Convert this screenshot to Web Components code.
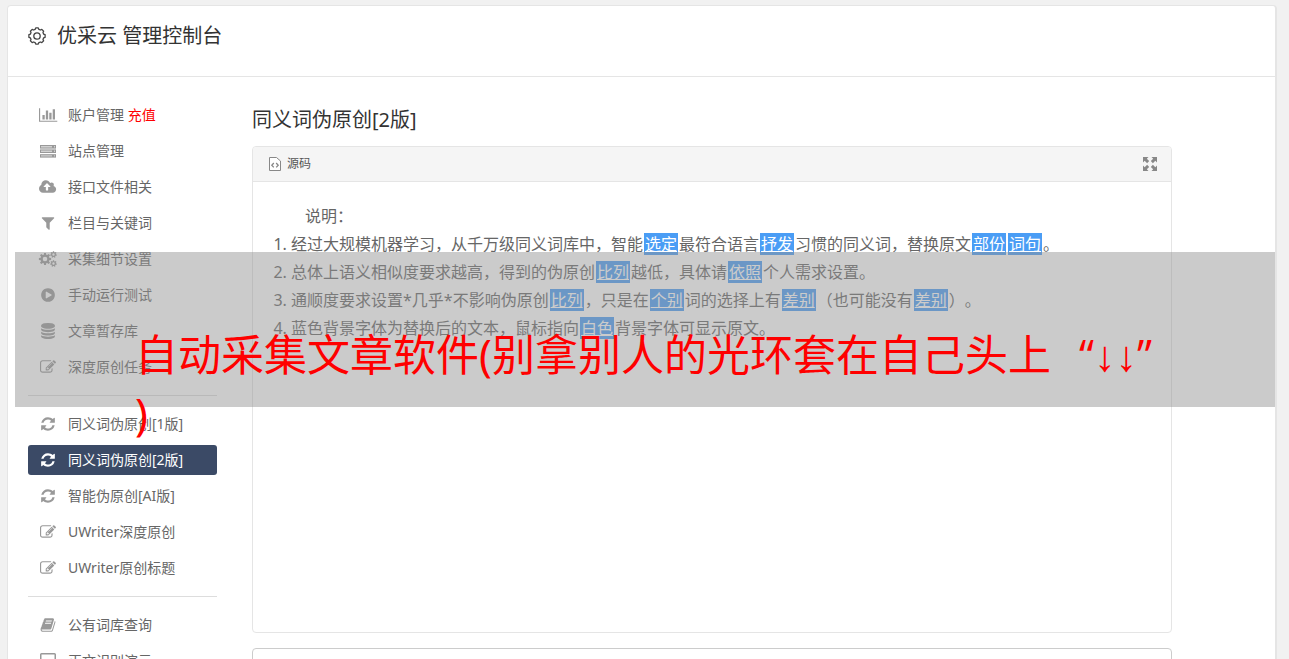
<!DOCTYPE html>
<html lang="zh-CN">
<head>
<meta charset="utf-8">
<title>优采云 管理控制台</title>
<style>
html { height: 100%; }
body { margin: 0; height: 100%; overflow: hidden; position: relative; background: #f1f1f1; color: #666; font: 14px/20px "Noto Sans", "Noto Sans CJK SC", sans-serif; text-spacing-trim: space-all; }
</style>
</head>
<body>
<console-shell>
  <console-header slot="header">优采云 管理控制台</console-header>
  <side-nav slot="nav">
    <nav-item icon="chart">账户管理 <red-note>充值</red-note></nav-item>
    <nav-item icon="server">站点管理</nav-item>
    <nav-item icon="cloud">接口文件相关</nav-item>
    <nav-item icon="filter">栏目与关键词</nav-item>
    <nav-item icon="cogs">采集细节设置</nav-item>
    <nav-item icon="play">手动运行测试</nav-item>
    <nav-item icon="database">文章暂存库</nav-item>
    <nav-item icon="edit">深度原创任务</nav-item>
    <nav-rule></nav-rule>
    <nav-item icon="refresh">同义词伪原创[1版]</nav-item>
    <nav-item icon="refresh" active>同义词伪原创[2版]</nav-item>
    <nav-item icon="refresh">智能伪原创[AI版]</nav-item>
    <nav-item icon="edit">UWriter深度原创</nav-item>
    <nav-item icon="edit">UWriter原创标题</nav-item>
    <nav-rule></nav-rule>
    <nav-item icon="book">公有词库查询</nav-item>
    <nav-item icon="laptop">正文识别演示</nav-item>
  </side-nav>
  <editor-page></editor-page>
</console-shell>
<title-banner></title-banner>

<script>
function gear(cx, cy, outer, inner, teeth) {
  const pts = [];
  for (let i = 0; i < teeth; i++) {
    [[-0.34, inner], [-0.2, outer], [0.2, outer], [0.34, inner]].forEach(([o, r]) => {
      const a = (i + o) * 2 * Math.PI / teeth - Math.PI / 2;
      pts.push((cx + r * Math.cos(a)).toFixed(2) + ' ' + (cy + r * Math.sin(a)).toFixed(2));
    });
  }
  return 'M' + pts.join('L') + 'z';
}
function hole(cx, cy, r) {
  return `M${cx - r} ${cy}a${r} ${r} 0 1 0 ${2 * r} 0a${r} ${r} 0 1 0 ${-2 * r} 0z`;
}
const fa = (w, d) => [w, 1792, `<path d="${d}"/>`];
const ICONS = {
  chart: fa(2048, 'M640 896v512h-256v-512h256zm384-512v1024h-256v-1024h256zm1024 1152v128h-2048v-1536h128v1408h1920zm-640-896v768h-256v-768h256zm384-384v1152h-256v-1152h256z'),
  server: [16, 16, '<path d="M0 2h16v3.400h-16zM0 6.600h16v3.400h-16zM0 11.200h16v3.400h-16z" opacity=".45"/><path d="M0 2h16v3.400h-16zM1 3v1.400h14v-1.400zM0 6.600h16v3.400h-16zM1 7.600v1.400h14v-1.400zM0 11.200h16v3.400h-16zM1 12.200v1.400h14v-1.400zM12 3h2v1.400h-2zM12 7.600h2v1.400h-2zM12 12.200h2v1.400h-2z"/>'],
  cloud: fa(1920, 'M1280 864q0-14-9-23l-352-352q-9-9-23-9t-23 9l-351 351q-10 12-10 24 0 14 9 23t23 9h224v352q0 13 9.500 22.500t22.500 9.500h192q13 0 22.500-9.500t9.500-22.500v-352h224q13 0 22.500-9.500t9.500-22.500zm640 288q0 159-112.500 271.500t-271.500 112.500h-1088q-185 0-316.500-131.500t-131.500-316.500q0-130 70-240t188-165q-2-30-2-43 0-212 150-362t362-150q156 0 285.500 87t188.500 231q71-62 166-62 106 0 181 75t75 181q0 76-41 138 130 31 213.500 135.500t83.500 238.500z'),
  filter: fa(1792, 'M1595 295q17 41-14 70l-493 493v742q0 42-39 59-13 5-25 5-27 0-45-19l-256-256q-19-19-19-45v-486l-493-493q-31-29-14-70 17-39 59-39h1280q42 0 59 39z'),
  cogs: [18, 16, `<path d="${gear(6, 8, 6.2, 4.5, 8)}${hole(6, 8, 2.3)}"/><path d="${gear(14.5, 3.500, 3.4, 2.4, 7)}${hole(14.5, 3.5, 1.2)}"/><path d="${gear(14.5, 12.5, 3.4, 2.4, 7)}${hole(14.5, 12.5, 1.2)}"/>`],
  play: fa(1792, 'M896 128q209 0 385.500 103t279.500 279.500 103 385.500-103 385.500-279.500 279.500-385.500 103-385.500-103-279.500-279.500-103-385.500 103-385.500 279.500-279.500 385.500-103zm384 823q32-18 32-55t-32-55l-544-320q-31-19-64-1-32 19-32 56v640q0 37 32 56 16 8 32 8 17 0 32-9z'),
  database: fa(1792, 'M896 768q237 0 443-43t325-127v170q0 69-103 128t-280 93.500-385 34.500-385-34.500-280-93.500-103-128v-170q119 84 325 127t443 43zm0 768q237 0 443-43t325-127v170q0 69-103 128t-280 93.500-385 34.500-385-34.500-280-93.500-103-128v-170q119 84 325 127t443 43zm0-384q237 0 443-43t325-127v170q0 69-103 128t-280 93.500-385 34.500-385-34.500-280-93.500-103-128v-170q119 84 325 127t443 43zm0-1152q208 0 385 34.500t280 93.500 103 128v128q0 69-103 128t-280 93.500-385 34.500-385-34.500-280-93.500-103-128v-128q0-69 103-128t280-93.500 385-34.500z'),
  edit: fa(1792, 'M888 1184l116-116-152-152-116 116v56h96v96h56zm440-720q-16-16-33 1l-350 350q-17 17-1 33t33-1l350-350q17-17 1-33zm80 594v190q0 119-84.500 203.500t-203.500 84.500h-832q-119 0-203.500-84.500t-84.500-203.500v-832q0-119 84.500-203.500t203.500-84.500h832q63 0 117 25 15 7 18 23 3 17-9 29l-49 49q-14 14-32 8-23-6-45-6h-832q-66 0-113 47t-47 113v832q0 66 47 113t113 47h832q66 0 113-47t47-113v-126q0-13 9-22l64-64q15-15 35-7t20 29zm-96-738l288 288-672 672h-288v-288zm444 132l-92 92-288-288 92-92q28-28 68-28t68 28l152 152q28 28 28 68t-28 68z'),
  refresh: fa(1792, 'M1639 1056q0 5-1 7-64 268-268 434.500t-478 166.500q-146 0-282.500-55t-243.500-157l-129 129q-19 19-45 19t-45-19-19-45v-448q0-26 19-45t45-19h448q26 0 45 19t19 45-19 45l-137 137q71 66 161 102t187 36q134 0 250-65t186-179q11-17 53-117 8-23 30-23h192q13 0 22.500 9.500t9.500 22.500zm25-800v448q0 26-19 45t-45 19h-448q-26 0-45-19t-19-45 19-45l138-138q-148-137-349-137-134 0-250 65t-186 179q-11 17-53 117-8 23-30 23h-199q-13 0-22.500-9.500t-9.500-22.500v-7q65-268 270-434.500t480-166.500q146 0 284 55.500t245 156.500l130-129q19-19 45-19t45 19 19 45z'),
  book: fa(1792, 'M1703 478q40 57 18 129l-275 906q-19 64-76.500 107.500t-122.500 43.500h-923q-77 0-148.500-53.500t-99.500-131.500q-24-67-2-127 0-4 3-27t4-37q1-8-3-21.500t-3-19.500q2-11 8-21t16.500-23.500 16.500-23.500q23-38 45-91.500t30-91.500q3-10 .5-30t-.5-28q3-11 17-28t17-23q21-36 42-92t25-90q1-9-2.500-32t.5-28q4-13 22-30.500t22-22.500q19-26 42.500-84.500t27.500-96.500q1-8-3-25.500t-2-26.500q2-8 9-18t18-23 17-21q8-12 16.500-30.500t15-35 16-36 19.500-32 26.500-23.500 36-11.500 47.500 5.500l-1 3q38-9 51-9h761q74 0 114 56t18 130l-274 906q-36 119-71.500 153.500t-128.500 34.500h-869q-27 0-38 15-11 16-1 43 24 70 144 70h923q29 0 56-15.500t35-41.500l300-987q7-22 5-57 38 15 59 43zm-1064 2q-4 13 2 22.500t20 9.500h608q13 0 25.500-9.500t16.500-22.500l21-64q4-13-2-22.500t-20-9.500h-608q-13 0-25.500 9.500t-16.500 22.500zm-83 256q-4 13 2 22.500t20 9.500h608q13 0 25.500-9.500t16.500-22.500l21-64q4-13-2-22.500t-20-9.500h-608q-13 0-25.500 9.500t-16.500 22.500z'),
  laptop: [18, 16, '<path d="M2.500 0h13q1.500 0 1.500 1.500v9q0 1.500-1.500 1.500h-13q-1.500 0-1.500-1.500v-9q0-1.500 1.500-1.500zM2.500 1.500v9h13v-9zM0 13h18v1q-1 1-2 1h-14q-1 0-2-1z"/>'],
  settings: [18, 18, `<g fill="none" stroke="currentColor" stroke-width="1.300" stroke-linejoin="round"><path d="${gear(9, 9, 8.2, 6.9, 8)}"/><circle cx="9" cy="9" r="3.200"/></g>`],
  source: [12, 14, '<g fill="none" stroke="currentColor"><path d="M.5.500h7l4 3.500v9.500h-11z" fill="#fff"/><path d="M4.800 6l-2 2.200 2 2.200M7.200 6l2 2.200-2 2.200" stroke-width="1.300"/></g>'],
  expand: [14, 14, '<path d="M0 0h5.500L3.800 1.700 6.200 4.100 4.100 6.200 1.700 3.800 0 5.500zM14 0v5.500L12.300 3.800 9.900 6.200 7.800 4.100 10.200 1.700 8.500 0zM0 14V8.500L1.700 10.200 4.100 7.800 6.200 9.900 3.800 12.300 5.500 14zM14 14H8.500L10.200 12.300 7.800 9.900 9.900 7.800 12.300 10.200 14 8.500z"/>']
};

function define(name, html) {
  customElements.define(name, class extends HTMLElement {
    constructor() {
      super();
      const t = document.createElement('template');
      t.innerHTML = html;
      this.attachShadow({ mode: 'open' }).append(t.content.cloneNode(true));
    }
  });
}

customElements.define('ui-icon', class extends HTMLElement {
  static get observedAttributes() { return ['name']; }
  constructor() { super(); this.attachShadow({ mode: 'open' }); }
  attributeChangedCallback() {
    const icon = ICONS[this.getAttribute('name')];
    if (!icon) return;
    this.shadowRoot.innerHTML = `<style>:host{display:flex;justify-content:center;align-items:center;height:16px}svg{display:block;height:100%;fill:currentColor;fill-rule:evenodd;overflow:visible}</style>
      <svg viewBox="0 0 ${icon[0]} ${icon[1]}" aria-hidden="true">${icon[2]}</svg>`;
  }
});

customElements.define('nav-item', class extends HTMLElement {
  connectedCallback() {
    if (this.shadowRoot) return;
    this.attachShadow({ mode: 'open' }).innerHTML = `<style>
      :host{display:block}
      a{display:flex;align-items:center;gap:10px;height:30px;padding:0 10px;border-radius:3px;color:#666;text-decoration:none;white-space:nowrap}
      ui-icon{flex:none;width:20px;color:#999}
      :host([active]) a{background:#3b4a66;color:#fff}
      :host([active]) ui-icon{color:#fff}
    </style><a href="#"><ui-icon name="${this.getAttribute('icon')}"></ui-icon><span><slot></slot></span></a>`;
  }
});

define('red-note', '<style>:host{color:#f00}</style><slot></slot>');
define('nav-rule', '<style>:host{display:block;height:1px;margin:7px 0;background:#ddd}</style>');
define('side-nav', '<style>:host{display:block}nav{display:flex;flex-direction:column;gap:6px}</style><nav><slot></slot></nav>');

define('console-header', `<style>
  :host{display:block;border-bottom:1px solid #e5e5e5}
  header{display:flex;align-items:center;gap:10px;height:60px;padding:0 19px 10px}
  h1{margin:0;color:#333;font-size:20px;line-height:28px;font-weight:400}
  ui-icon{width:20px;height:18px;color:#444}
</style><header><ui-icon name="settings"></ui-icon><h1><slot></slot></h1></header>`);

define('console-shell', `<style>
  :host{display:block;margin:5px 12px 0 7px;background:#fff;border:1px solid #e5e5e5;border-right-width:2px;border-radius:4px}
  .body{display:grid;grid-template-columns:189px minmax(0,1fr);gap:35px;padding:23px 103px 20px 20px}
</style><slot name="header"></slot><div class="body"><slot name="nav"></slot><main><slot></slot></main></div>`);

define('swap-word', `<style>
  :host{display:inline}
  a{margin:0 1px;padding:0 1px;background:#4a9df5;color:#fff;text-decoration:underline}
</style><a href="#"><slot></slot></a>`);

define('source-card', `<style>
  :host{display:block;border:1px solid #e5e5e5;border-radius:4px;overflow:hidden}
  .bar{display:flex;align-items:center;justify-content:space-between;height:34px;padding:0 14px 0 16px;background:#f5f5f5;border-bottom:1px solid #e5e5e5}
  .label{display:flex;align-items:center;gap:6px;font-size:12px;color:#555}
  .label ui-icon{width:12px;height:14px;color:#888}
  button{display:block;padding:0;border:0;background:none;color:#888}
  button ui-icon{width:14px;height:14px}
  .text{min-height:410px;padding:20px;font-size:16px;line-height:28px}
</style>
<div class="bar"><span class="label"><ui-icon name="source"></ui-icon>源码</span><button type="button" aria-label="全屏"><ui-icon name="expand"></ui-icon></button></div>
<div class="text"><slot></slot></div>`);

define('editor-page', `<style>
  :host{display:block}
  h2{margin:4px 0 11px;color:#333;font-size:20px;line-height:31px;font-weight:400}
  p{margin:0;text-indent:32px}
  ol{margin:0;padding-left:18px}
  textarea{display:block;box-sizing:border-box;width:100%;height:120px;margin-top:15px;border:1px solid #ccc;border-radius:4px;background:#fff;resize:none}
</style>
<h2>同义词伪原创[2版]</h2>
<source-card>
  <p>说明：</p>
  <ol>
    <li>经过大规模机器学习，从千万级同义词库中，智能<swap-word>选定</swap-word>最符合语言<swap-word>抒发</swap-word>习惯的同义词，替换原文<swap-word>部份</swap-word><swap-word>词句</swap-word>。</li>
    <li>总体上语义相似度要求越高，得到的伪原创<swap-word>比列</swap-word>越低，具体请<swap-word>依照</swap-word>个人需求设置。</li>
    <li>通顺度要求设置*几乎*不影响伪原创<swap-word>比列</swap-word>，只是在<swap-word>个别</swap-word>词的选择上有<swap-word>差别</swap-word>（也可能没有<swap-word>差别</swap-word>）。</li>
    <li>蓝色背景字体为替换后的文本，鼠标指向<swap-word>白色</swap-word>背景字体可显示原文。</li>
  </ol>
</source-card>
<textarea aria-label="输出"></textarea>`);

/* The banner floats over the console, its caption may run past its lower edge. */
define('title-banner', `<style>
  :host{display:block;position:absolute;top:252px;left:15px;right:14px;height:155px;box-sizing:border-box;padding:74px 0 0 120px;background:rgba(145,145,145,.47);color:#f00;font-size:43px;line-height:58px;white-space:nowrap}
  .line{display:block}
  .quote{display:inline-block;width:43px;font-family:"Open Sans","Noto Sans",sans-serif}
  .open{text-align:right}
  .arrows{font-family:"Liberation Sans",sans-serif}
</style><span class="line">自动采集文章软件(别拿别人的光环套在自己头上<span class="quote open">“</span><span class="arrows">↓↓</span><span class="quote">”</span></span><span class="line">)</span>`);
</script>
</body>
</html>
